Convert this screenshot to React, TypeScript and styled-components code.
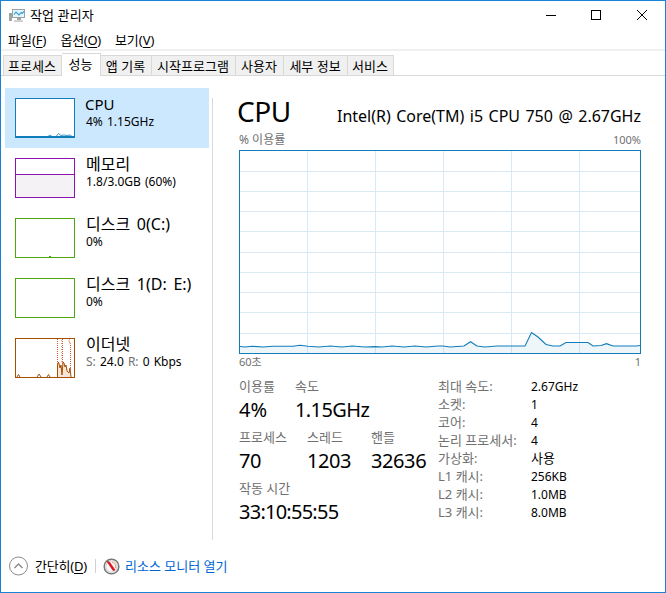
import React from 'react';
import styled, { createGlobalStyle, css } from 'styled-components';

const GlobalStyle = createGlobalStyle`
  *, *::before, *::after { box-sizing: border-box; }
  body { margin: 0; background: #fff; }
`;

const Window = styled.div`
  width: 666px;
  height: 593px;
  border: 1px solid #1883d7;
  background: #fff;
  color: #000;
  display: flex;
  flex-direction: column;
  overflow: hidden;
  font: 13px/18px "Noto Sans", "Noto Sans CJK KR", sans-serif;
  white-space: nowrap;
  svg { display: block; flex: none; }
`;

const TitleBar = styled.header`
  height: 29px;
  flex: none;
  display: flex;
  align-items: center;
  padding-left: 8px;
`;

const WindowTitle = styled.h1`
  margin: 0 0 2px 5px;
  flex: 1;
  font-size: 13px;
  line-height: 18px;
  font-weight: 400;
  letter-spacing: 0.1px;
`;

const CaptionButton = styled.button<{ $width?: number }>`
  width: ${p => p.$width ?? 46}px;
  height: 29px;
  border: 0;
  padding: 0;
  background: none;
  display: flex;
  align-items: center;
  justify-content: center;
`;

const MenuBar = styled.nav`
  height: 21px;
  flex: none;
  display: flex;
  align-items: center;
  gap: 14px;
  padding: 2px 0 1px 7px;
  border-bottom: 2px solid #f0f0f0;
`;

const MenuItem = styled.span<{ $tracking?: number }>`
  letter-spacing: ${p => p.$tracking ?? 0}px;
`;

const Key = styled.span`
  text-decoration: underline;
  text-underline-offset: 2px;
`;

const TabStrip = styled.div`
  height: 25px;
  flex: none;
  display: flex;
  align-items: flex-end;
  padding-left: 2px;
  border-bottom: 1px solid #d9d9d9;
`;

const Tab = styled.div<{ $width: number; $active?: boolean }>`
  width: ${p => p.$width}px;
  height: 20px;
  padding: 1px 1px 0 0;
  text-align: center;
  line-height: 18px;
  background: #f0f0f0;
  border: solid #d9d9d9;
  border-width: 1px 1px 0 0;
  &:first-child { border-left-width: 1px; }
  ${p => p.$active && css`
    height: 23px;
    margin-bottom: -1px;
    background: #fff;
  `}
`;

const Body = styled.main`
  height: 464px;
  flex: none;
  display: flex;
`;

const Sidebar = styled.aside`
  width: 208px;
  padding: 12px 0 0 4px;
`;

const ResourceItem = styled.div<{ $selected?: boolean }>`
  height: 60px;
  width: 204px;
  display: flex;
  padding: 10px 0 0 10px;
  gap: 11px;
  background: ${p => (p.$selected ? '#cce8ff' : 'transparent')};
`;

const ResourceText = styled.div`
  margin-top: -4px;
`;

const ResourceName = styled.div<{ $latin?: boolean }>`
  font-size: ${p => (p.$latin ? 15 : 16)}px;
  line-height: 20px;
  word-spacing: 2.5px;
  margin-left: ${p => (p.$latin ? -1 : 0)}px;
`;

const ResourceValue = styled.div`
  font-size: 12px;
  line-height: 16px;
  word-spacing: 1px;
`;

const Dim = styled.span`
  color: #707070;
`;

const Divider = styled.div`
  width: 1px;
  margin: 22px 0 0 3px;
  height: 442px;
  background: #d9d9d9;
`;

const Details = styled.section`
  width: 402px;
  margin-left: 26px;
  padding-top: 17px;
`;

const DetailsHeader = styled.div`
  height: 38px;
  display: flex;
  align-items: baseline;
  justify-content: space-between;
`;

const DetailsTitle = styled.h2`
  margin: 0 0 0 -2px;
  font-size: 28px;
  line-height: 36px;
  font-weight: 400;
  letter-spacing: -0.5px;
`;

const DeviceName = styled.div`
  font-size: 16px;
  line-height: 20px;
  word-spacing: 1.3px;
`;

const AxisRow = styled.div<{ $height: number }>`
  height: ${p => p.$height}px;
  display: flex;
  justify-content: space-between;
  font-size: 11px;
  line-height: ${p => p.$height - 1}px;
  color: #707070;
`;

const AxisTitle = styled.span`
  font-size: 12px;
`;

const Stats = styled.div`
  display: flex;
  padding-top: 6px;
`;

const Metrics = styled.div`
  width: 199px;
`;

const MetricRow = styled.div`
  height: 51px;
  display: flex;
`;

const Metric = styled.div<{ $width: number }>`
  width: ${p => p.$width}px;
`;

const MetricLabel = styled.div`
  color: #707070;
  line-height: 18px;
`;

const MetricValue = styled.div<{ $tracking?: number }>`
  font-size: 20px;
  line-height: 30px;
  letter-spacing: ${p => p.$tracking ?? -0.4}px;
`;

const Specs = styled.dl`
  margin: 0;
  display: grid;
  grid-template-columns: 93px auto;
  grid-auto-rows: 18px;
`;

const SpecName = styled.dt`
  color: #707070;
`;

const SpecValue = styled.dd<{ $hangul?: boolean }>`
  margin: 0;
  font-size: ${p => (p.$hangul ? 13 : 12)}px;
  line-height: ${p => (p.$hangul ? 18 : 19)}px;
`;

const Footer = styled.footer`
  flex: 1;
  display: flex;
  align-items: center;
  padding: 0 0 0 7px;
`;

const FewerDetails = styled.span`
  margin-left: 7px;
  letter-spacing: -0.2px;
`;

const FooterSeparator = styled.div`
  width: 1px;
  height: 14px;
  margin: 0 7px 0 8px;
  background: #d0d0d0;
`;

const MonitorLink = styled.a`
  margin-left: 5px;
  color: #0066d4;
`;

function AppIcon() {
  return (
    <svg width="16" height="14" viewBox="0 0 16 14">
      <rect x="0" y="4" width="3" height="8" fill="#a4a4a4" />
      <path d="M1 5h1v1H1z" fill="#49b04b" />
      <rect x="3.5" y=".5" width="12" height="8" fill="#e6f6fd" stroke="#9aa1a5" />
      <path d="M5 5.5l2-2.5 3 3 2-2.5 1 1 2-2" fill="none" stroke="#2d9bd0" strokeWidth="1.1" />
      <path d="M8 9h4v2H8z" fill="#a4a4a4" />
      <path d="M5 11.5h9v1.2H5z" fill="#b5b5b5" />
    </svg>
  );
}

function CpuThumb() {
  return (
    <svg width="60" height="40">
      <rect x=".5" y=".5" width="59" height="39" fill="#fff" stroke="#117dbb" />
      <path d="M1 38.5H59" stroke="#117dbb" />
      <path d="M33 38.5L35 37L37 38.5H41L43.5 35.5L46 37.5L49 37L52 37.5L55 37L57 38.5" fill="none" stroke="#117dbb" strokeWidth=".8" />
    </svg>
  );
}

function MemoryThumb() {
  return (
    <svg width="60" height="40">
      <rect x=".5" y=".5" width="59" height="39" fill="#fff" stroke="#8b12ae" />
      <rect x="1" y="17" width="58" height="22" fill="#f4f2f4" />
      <rect x="1" y="16" width="58" height="1" fill="#8b12ae" />
    </svg>
  );
}

function DiskThumb({ active }: { active?: boolean }) {
  return (
    <svg width="60" height="40">
      <rect x=".5" y=".5" width="59" height="39" fill="#fff" stroke="#4da60c" />
      {active && <path d="M34 38.5h2" stroke="#4da60c" />}
    </svg>
  );
}

function NetworkThumb() {
  return (
    <svg width="60" height="40">
      <rect x=".5" y=".5" width="59" height="39" fill="#fff" stroke="#a74f01" />
      <path d="M43 39V27L44 24L45 30L46 27L47 37L48 24L50 27L51 31L52 30L53 36L55 31L56 39Z" fill="#f5e6d8" />
      <path d="M2 39L3.5 36.5L5 39M22 39L24 36L26 39M32 39L33.5 36.5L35 39M42.5 39V27L43.5 24L45 30L46 27L47 37L48 24L49 25L50 29L51 27L52 33L54 35L55 30L56 39" fill="none" stroke="#a74f01" />
      <path d="M42.5 1V27M47.5 1V26M55.5 34V6L53.5 2" fill="none" stroke="#d4592b" strokeDasharray="1 1" />
      <path d="M46.5 2V25M54.5 1V6" stroke="#e8a184" strokeDasharray="1 2" />
    </svg>
  );
}

const usageLine =
  'M1 196.5L6 197L13 196.2L24 197L34 196.2H54L61 195.3L69 196.2L80 197L91 196L103 197L113 196L126 197L136 196.6L143 197L153 196L165 197L176 196L187 197L199 196H204L211 197L225 196L231.5 191.7L238 196L246 197L258 196H286L292.5 182.5L299 187L307 194.5L314 196H321L327 192.5H349L354 196L362 195.5L367.5 193.7L374 196H397L401 195.5';

function UsageChart() {
  const columns = [68.5, 136.5, 204.5, 272.5, 340.5];
  const rows = [21.5, 41.5, 61.5, 81.5, 102.5, 122.5, 142.5, 162.5, 183.5];
  return (
    <svg width="402" height="204">
      {columns.map(x => <path key={x} d={`M${x} 1V203`} stroke="#d9eaf4" />)}
      {rows.map(y => <path key={y} d={`M1 ${y}H401`} stroke="#d9eaf4" />)}
      <path d={`${usageLine}V203H1Z`} fill="#117dbb" fillOpacity=".07" />
      <path d={usageLine} fill="none" stroke="#117dbb" strokeWidth="1.1" />
      <rect x=".5" y=".5" width="401" height="203" fill="none" stroke="#117dbb" />
    </svg>
  );
}

function CollapseIcon() {
  return (
    <svg width="20" height="20">
      <circle cx="10.5" cy="10" r="9" fill="#fff" stroke="#8a8a8a" />
      <path d="M6.5 12L10.5 8L14.5 12" fill="none" stroke="#8a8a8a" strokeWidth="1.4" />
    </svg>
  );
}

function GaugeIcon() {
  return (
    <svg width="17" height="17">
      <circle cx="8.5" cy="8.5" r="7.3" fill="#fff" stroke="#777" strokeWidth="1.5" />
      <circle cx="8.5" cy="8.5" r="5.6" fill="#fafafa" stroke="#c9c9c9" />
      <path d="M9 4.2A4.5 4.5 0 0 1 12.5 10" fill="none" stroke="#e6a36a" />
      <path d="M4 3.5L6.5 4L12 12L10 12.5Z" fill="#e0101a" stroke="#e0101a" strokeWidth=".7" />
    </svg>
  );
}

const tabs = [
  { name: '프로세스', width: 59 },
  { name: '성능', width: 39, active: true },
  { name: '앱 기록', width: 51 },
  { name: '시작프로그램', width: 84 },
  { name: '사용자', width: 48 },
  { name: '세부 정보', width: 64 },
  { name: '서비스', width: 46 },
];

const specs = [
  ['최대 속도:', '2.67GHz'],
  ['소켓:', '1'],
  ['코어:', '4'],
  ['논리 프로세서:', '4'],
  ['가상화:', '사용'],
  ['L1 캐시:', '256KB'],
  ['L2 캐시:', '1.0MB'],
  ['L3 캐시:', '8.0MB'],
];

export default function App() {
  return (
    <>
      <GlobalStyle />
      <Window>
        <TitleBar>
          <AppIcon />
          <WindowTitle>작업 관리자</WindowTitle>
          <CaptionButton $width={44} aria-label="최소화">
            <svg width="10" height="11"><path d="M0 5.5h10" stroke="#000" /></svg>
          </CaptionButton>
          <CaptionButton aria-label="최대화">
            <svg width="10" height="11"><rect x=".5" y=".5" width="9" height="9" fill="none" stroke="#000" /></svg>
          </CaptionButton>
          <CaptionButton aria-label="닫기">
            <svg width="10" height="11"><path d="M0 0L10 10M10 0L0 10" stroke="#000" /></svg>
          </CaptionButton>
        </TitleBar>
        <MenuBar>
          <MenuItem>파일(<Key>F</Key>)</MenuItem>
          <MenuItem $tracking={-0.3}>옵션(<Key>O</Key>)</MenuItem>
          <MenuItem>보기(<Key>V</Key>)</MenuItem>
        </MenuBar>
        <TabStrip>
          {tabs.map(t => <Tab key={t.name} $width={t.width} $active={t.active}>{t.name}</Tab>)}
        </TabStrip>
        <Body>
          <Sidebar>
            <ResourceItem $selected>
              <CpuThumb />
              <ResourceText>
                <ResourceName $latin>CPU</ResourceName>
                <ResourceValue>4% 1.15GHz</ResourceValue>
              </ResourceText>
            </ResourceItem>
            <ResourceItem>
              <MemoryThumb />
              <ResourceText>
                <ResourceName>메모리</ResourceName>
                <ResourceValue>1.8/3.0GB (60%)</ResourceValue>
              </ResourceText>
            </ResourceItem>
            <ResourceItem>
              <DiskThumb active />
              <ResourceText>
                <ResourceName>디스크 0(C:)</ResourceName>
                <ResourceValue>0%</ResourceValue>
              </ResourceText>
            </ResourceItem>
            <ResourceItem>
              <DiskThumb />
              <ResourceText>
                <ResourceName>디스크 1(D: E:)</ResourceName>
                <ResourceValue>0%</ResourceValue>
              </ResourceText>
            </ResourceItem>
            <ResourceItem>
              <NetworkThumb />
              <ResourceText>
                <ResourceName>이더넷</ResourceName>
                <ResourceValue><Dim>S:</Dim> 24.0 <Dim>R:</Dim> 0 Kbps</ResourceValue>
              </ResourceText>
            </ResourceItem>
          </Sidebar>
          <Divider />
          <Details>
            <DetailsHeader>
              <DetailsTitle>CPU</DetailsTitle>
              <DeviceName>Intel(R) Core(TM) i5 CPU 750 @ 2.67GHz</DeviceName>
            </DetailsHeader>
            <AxisRow $height={19}><AxisTitle>% 이용률</AxisTitle><span>100%</span></AxisRow>
            <UsageChart />
            <AxisRow $height={17}><span>60초</span><span>1</span></AxisRow>
            <Stats>
              <Metrics>
                <MetricRow>
                  <Metric $width={56}><MetricLabel>이용률</MetricLabel><MetricValue $tracking={0}>4%</MetricValue></Metric>
                  <Metric $width={90}><MetricLabel>속도</MetricLabel><MetricValue $tracking={-0.6}>1.15GHz</MetricValue></Metric>
                </MetricRow>
                <MetricRow>
                  <Metric $width={68}><MetricLabel>프로세스</MetricLabel><MetricValue>70</MetricValue></Metric>
                  <Metric $width={64}><MetricLabel>스레드</MetricLabel><MetricValue>1203</MetricValue></Metric>
                  <Metric $width={60}><MetricLabel>핸들</MetricLabel><MetricValue>32636</MetricValue></Metric>
                </MetricRow>
                <MetricRow>
                  <Metric $width={120}><MetricLabel>작동 시간</MetricLabel><MetricValue $tracking={-0.75}>33:10:55:55</MetricValue></Metric>
                </MetricRow>
              </Metrics>
              <Specs>
                {specs.map(([name, value]) => (
                  <React.Fragment key={name}>
                    <SpecName>{name}</SpecName>
                    <SpecValue $hangul={value === '사용'}>{value}</SpecValue>
                  </React.Fragment>
                ))}
              </Specs>
            </Stats>
          </Details>
        </Body>
        <Footer>
          <CollapseIcon />
          <FewerDetails>간단히(<Key>D</Key>)</FewerDetails>
          <FooterSeparator />
          <GaugeIcon />
          <MonitorLink>리소스 모니터 열기</MonitorLink>
        </Footer>
      </Window>
    </>
  );
}
